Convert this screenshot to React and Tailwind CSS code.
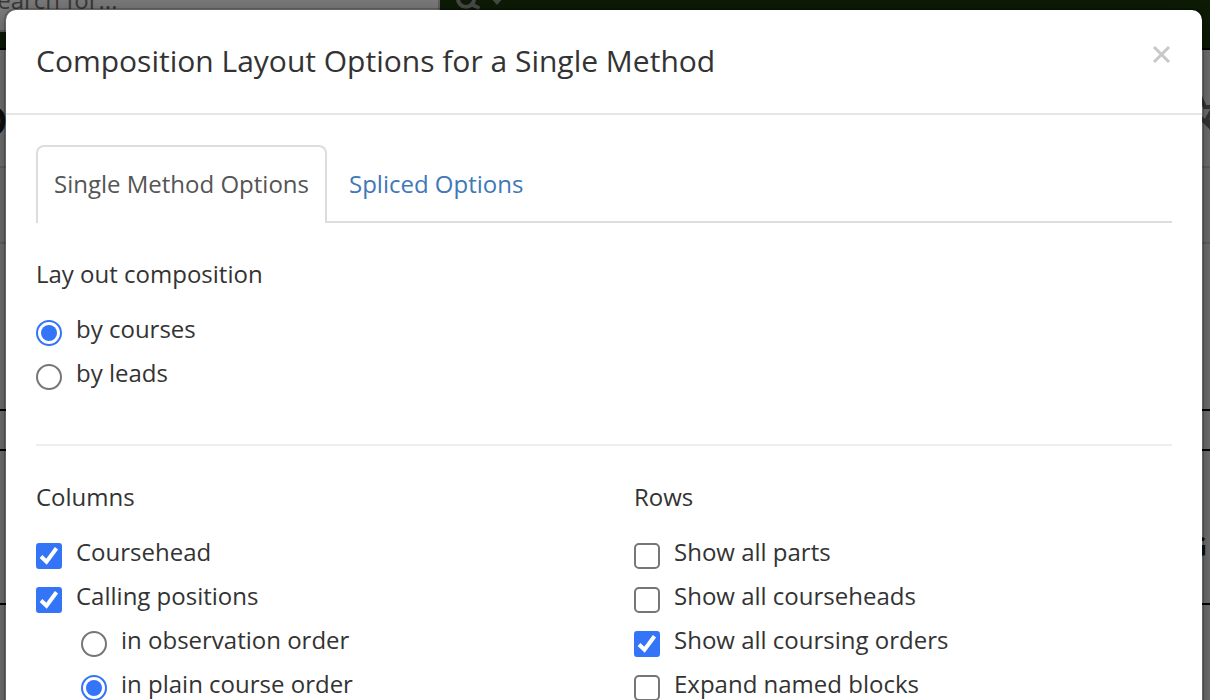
import React, { useState } from 'react'

const COLUMN_OPTIONS = [
    { id: 'coursehead', label: 'Coursehead', checked: true },
    { id: 'calling', label: 'Calling positions', checked: true }
]

const ORDER_OPTIONS = [
    { id: 'observation', label: 'in observation order' },
    { id: 'plain', label: 'in plain course order' }
]

const ROW_OPTIONS = [
    { id: 'parts', label: 'Show all parts' },
    { id: 'courseheads', label: 'Show all courseheads' },
    { id: 'orders', label: 'Show all coursing orders', checked: true },
    { id: 'blocks', label: 'Expand named blocks' }
]

function Checkbox({ id, label, checked }) {
    return (
        <div className="flex h-11 items-start gap-[14px]">
            <div className="relative mt-2 h-[26px] w-[26px] shrink-0">
                <input id={id} type="checkbox" defaultChecked={checked} className="peer block h-[26px] w-[26px] appearance-none rounded-[5px] border-2 border-[#767676] bg-white checked:rounded-[3px] checked:border-[#3375f6] checked:bg-[#3375f6]" />
                <svg viewBox="0 0 26 26" className="pointer-events-none absolute inset-0 hidden peer-checked:block" fill="none" stroke="#fff" strokeWidth="4">
                    <path d="M5 13.5 L10.5 18.8 L20.5 5.2" />
                </svg>
            </div>
            <label htmlFor={id}>{label}</label>
        </div>
    )
}

function Radio({ id, name, label, value, onChange }) {
    return (
        <div className="flex h-11 items-start gap-[14px]">
            <div className="relative mt-2 h-[26px] w-[26px] shrink-0">
                <input id={id} type="radio" name={name} checked={value === id} onChange={() => onChange(id)} className="peer block h-[26px] w-[26px] appearance-none rounded-full border-2 border-[#767676] bg-white checked:border-[#3375f6]" />
                <span className="pointer-events-none absolute inset-[5px] hidden rounded-full bg-[#3375f6] peer-checked:block"></span>
            </div>
            <label htmlFor={id}>{label}</label>
        </div>
    )
}

// The page behind the dialog
function PageBehind() {
    return (
        <div className="h-full overflow-hidden bg-white">
            <header className="flex h-[50px] items-end overflow-hidden border-b-2 border-black bg-[#1a380c] pb-[16px]">
                <input type="text" aria-label="Search" placeholder="Search for..." className="-ml-[30px] h-[66px] w-[470px] shrink-0 border-2 border-[#ccc] bg-white pl-3 text-[24px] placeholder:text-[#777]" />
                <button type="button" aria-label="Search options" className="ml-[14px] flex h-[62px] shrink-0 items-center gap-2 text-[#999]">
                    <svg width="28" height="28" viewBox="0 0 28 28" fill="none" stroke="currentColor" strokeWidth="4">
                        <circle cx="12" cy="12" r="8" />
                        <path d="M17.500 17.500 L24 20.500" strokeLinecap="round" />
                    </svg>
                    <svg width="14" height="14" viewBox="0 0 14 14" fill="currentColor">
                        <path d="M0 3 L14 3 L7 11 Z" />
                    </svg>
                </button>
            </header>
            <div className="flex h-[118px] items-center justify-between border-b-2 border-[#ddd]">
                <span className="-ml-[23px] pt-6 text-[42px] leading-none font-semibold text-[#222]">D</span>
                <svg width="48" height="48" viewBox="0 0 48 48" className="-mr-[38px] shrink-0" fill="none" stroke="#777" strokeWidth="4">
                    <path d="M-1 10 L5 23 L20 23 M12 26 L7 35 L14 45 M-1 32 L12 45" />
                </svg>
            </div>
            <div className="h-[76px] border-b-2 border-[#ddd] bg-[#f8f8f8]"></div>
            <div className="h-[167px] border-b-2 border-black"></div>
            <div className="h-10 border-b-2 border-black"></div>
            <div className="flex h-[154px] items-end justify-end border-b-2 border-black pr-[3px] pb-[44px] text-[26px] leading-[26px] font-bold text-[#222]">G</div>
        </div>
    )
}

export default function App() {
    const [tab, setTab] = useState('single')
    const [layout, setLayout] = useState('courses')
    const [order, setOrder] = useState('plain')

    return (
        <div className="relative h-screen overflow-hidden font-['Open_Sans',sans-serif] text-[24px] leading-[34px] text-[#333]">
            <PageBehind />
            <div className="absolute inset-0 overflow-hidden bg-black/50 pt-2 pr-[6px] pl-1">
                <div role="dialog" aria-labelledby="dialog-title" className="min-h-[1000px] rounded-[12px] border-2 border-black/20 bg-white bg-clip-padding shadow-[0_10px_30px_rgba(0,0,0,0.5)]">
                    <div className="flex items-start justify-between border-b-2 border-[#e5e5e5] px-[30px] pt-[30px] pb-[31px]">
                        <h4 id="dialog-title" className="text-[30px] leading-[42px]">Composition Layout Options for a Single Method</h4>
                        <button type="button" aria-label="Close" className="mt-[4px] text-[#c8c8c8]">
                            <svg width="21" height="21" viewBox="0 0 21 21" fill="none" stroke="currentColor" strokeWidth="3">
                                <path d="M3 3 L18 18 M18 3 L3 18" />
                            </svg>
                        </button>
                    </div>
                    <div className="p-[30px]">
                        <div role="tablist" className="flex border-b-2 border-[#ddd]">
                            <button type="button" role="tab" aria-selected={tab === 'single'} onClick={() => setTab('single')} className="-mb-[2px] rounded-t-[8px] border-2 border-b-0 border-[#ddd] bg-white px-4 pt-5 pb-[22px] text-[#555]">Single Method Options</button>
                            <button type="button" role="tab" aria-selected={tab === 'spliced'} onClick={() => setTab('spliced')} className="px-[22px] pt-[22px] pb-5 text-[#4078b8]">Spliced Options</button>
                        </div>

                        <fieldset className="mt-[34px]">
                            <legend className="mb-[21px]">Lay out composition</legend>
                            <Radio id="courses" name="layout" label="by courses" value={layout} onChange={setLayout} />
                            <Radio id="leads" name="layout" label="by leads" value={layout} onChange={setLayout} />
                        </fieldset>

                        <hr className="mt-[44px] border-t-2 border-[#eee]" />

                        <div className="mt-[34px] grid grid-cols-2 gap-[60px]">
                            <fieldset>
                                <legend className="mb-[21px]">Columns</legend>
                                {COLUMN_OPTIONS.map(o => <Checkbox key={o.id} {...o} />)}
                                <div className="pl-[45px]">
                                    {ORDER_OPTIONS.map(o => <Radio key={o.id} {...o} name="order" value={order} onChange={setOrder} />)}
                                </div>
                            </fieldset>
                            <fieldset>
                                <legend className="mb-[21px]">Rows</legend>
                                {ROW_OPTIONS.map(o => <Checkbox key={o.id} {...o} />)}
                            </fieldset>
                        </div>
                    </div>
                </div>
            </div>
        </div>
    )
}
